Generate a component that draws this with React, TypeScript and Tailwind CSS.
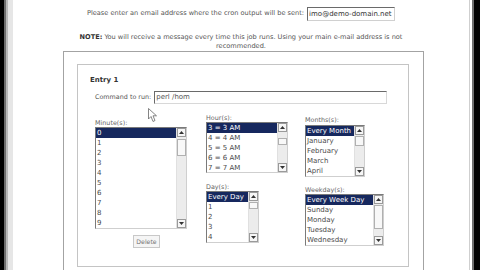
import React from "react";

function Tri({ up }: { up?: boolean }) {
  return (
    <svg width="5" height="3" viewBox="0 0 5 3">
      {up ? <path d="M0 3 L2.5 0 L5 3 Z" fill="#333" /> : <path d="M0 0 L2.5 3 L5 0 Z" fill="#333" />}
    </svg>
  );
}

function ListBox({
  box,
  items,
  thumb,
}: {
  box: string;
  items: string[];
  thumb: string;
}) {
  return (
    <div className={`flex border border-t-[#7a7a7a] border-l-[#7a7a7a] border-r-[#cfcfcf] border-b-[#cfcfcf] bg-white ${box}`}>
      <div className="flex-1 min-w-0 overflow-hidden">
        {items.map((it, i) => (
          <div
            key={i}
            className={
              i === 0
                ? "h-[10px] leading-[10px] pl-[1px] text-[7px] whitespace-nowrap bg-[#16285e] text-white"
                : "h-[10px] leading-[10px] pl-[1px] text-[7px] whitespace-nowrap text-[#4a4a4a]"
            }
          >
            {it}
          </div>
        ))}
      </div>
      <div className="w-[10px] flex flex-col bg-[#ececec] border-l border-[#e0e0e0]">
        <div className="h-[9px] flex items-center justify-center bg-[#f6f6f6] border border-[#9a9a9a]">
          <Tri up />
        </div>
        <div className={`bg-[#f8f8f8] border border-[#b0b0b0] ${thumb}`} />
        <div className="flex-1" />
        <div className="h-[9px] flex items-center justify-center bg-[#f6f6f6] border border-[#9a9a9a]">
          <Tri />
        </div>
      </div>
    </div>
  );
}

export default function App() {
  return (
    <div className="relative w-[480px] h-[270px] bg-black flex overflow-hidden font-['DejaVu_Sans',sans-serif]">
      <div className="w-[4px] h-full bg-black" />
      <div className="w-[2px] h-full bg-[#6e6e6e]" />
      <div className="w-[2px] h-full bg-[#b8b8b8]" />
      <div className="w-[5px] h-full bg-[#e6e6e6]" />
      <div className="flex-1 h-full bg-white flex flex-col">
        <div className="mt-[7px] h-[14px] flex justify-center items-center gap-[3px]">
          <span className="text-[6.6px] text-[#555]">
            Please enter an email address where the cron output will be sent:
          </span>
          <div className="w-[88px] h-[14px] border border-t-[#6a6a6a] border-l-[#6a6a6a] border-r-[#d0d0d0] border-b-[#d0d0d0] flex items-center pl-[1px] text-[7px] text-[#333] overflow-hidden whitespace-nowrap">
            imo@demo-domain.net
          </div>
        </div>
        <div className="mt-[12px] text-center text-[6.6px] leading-[9px] text-[#555]">
          <b className="text-[#333]">NOTE:</b> You will receive a message every time this job runs. Using your main e-mail address is not
          <br />
          recommended.
        </div>
        <div className="ml-[50px] w-[361px] h-[230px] border border-[#a3a3a3] border-b-0">
          <div className="ml-[13px] mt-[12px] w-[332px] h-[203px] border border-[#c4c4c4] flex flex-col">
            <div className="ml-[12px] mt-[10px] h-[10px] leading-[10px] text-[7px] font-bold text-[#333]">Entry 1</div>
            <div className="ml-[17px] mt-[6px] h-[13px] flex items-center gap-[3px]">
              <span className="text-[6.4px] text-[#555]">Command to run:</span>
              <div className="w-[233px] h-[13px] border border-t-[#6a6a6a] border-l-[#6a6a6a] border-r-[#d8d8d8] border-b-[#d8d8d8] flex items-center pl-[1px] text-[7px] text-[#555]">
                perl /hom
              </div>
            </div>
            <div className="ml-[17px] mt-[10px] flex items-start">
              <div className="w-[92px] mt-[5px] flex flex-col">
                <div className="h-[8px] leading-[8px] text-[6.4px] text-[#666]">Minute(s):</div>
                <ListBox
                  box="w-[92px] h-[102px]"
                  items={["0", "1", "2", "3", "4", "5", "6", "7", "8", "9"]}
                  thumb="h-[17px] mt-[2px]"
                />
                <div className="ml-[38px] mt-[6px] w-[27px] h-[13px] bg-[#f5f5f5] border border-[#c8c8c8] flex items-center justify-center text-[6.2px] text-[#777]">
                  Delete
                </div>
              </div>
              <div className="ml-[19px] w-[82px] flex flex-col">
                <div className="h-[8px] leading-[8px] text-[6.4px] text-[#666]">Hour(s):</div>
                <ListBox
                  box="w-[82px] h-[51px]"
                  items={["3 = 3 AM", "4 = 4 AM", "5 = 5 AM", "6 = 6 AM", "7 = 7 AM"]}
                  thumb="h-[7px] mt-[6px]"
                />
                <div className="mt-[10px] h-[8px] leading-[8px] text-[6.4px] text-[#666]">Day(s):</div>
                <ListBox
                  box="w-[53px] h-[52px]"
                  items={["Every Day", "1", "2", "3", "4"]}
                  thumb="h-[7px] mt-[1px]"
                />
              </div>
              <div className="ml-[17px] mt-[2px] w-[80px] flex flex-col">
                <div className="h-[8px] leading-[8px] text-[6.4px] text-[#666]">Months(s):</div>
                <ListBox
                  box="w-[60px] mt-[1px] h-[52px]"
                  items={["Every Month", "January", "February", "March", "April"]}
                  thumb="h-[10px] mt-[1px]"
                />
                <div className="mt-[9px] h-[8px] leading-[8px] text-[6.4px] text-[#666]">Weekday(s):</div>
                <ListBox
                  box="w-[79px] h-[52px]"
                  items={["Every Week Day", "Sunday", "Monday", "Tuesday", "Wednesday"]}
                  thumb="h-[24px] mt-[1px]"
                />
              </div>
            </div>
          </div>
        </div>
      </div>
      <div className="w-[1px] h-full bg-[#cfcfcf]" />
      <div className="w-[2px] h-full bg-white" />
      <div className="w-[2px] h-full bg-[#6e6e6e]" />
      <div className="w-[6px] h-full bg-black" />
      <svg className="absolute left-[148px] top-[108px]" width="10" height="15" viewBox="0 0 10 15">
        <path d="M0.5 0.5 L0.5 11 L3 8.5 L5 13.5 L7 12.5 L5 7.8 L8.5 7.8 Z" fill="#fff" stroke="#666" strokeWidth="0.8" />
      </svg>
    </div>
  );
}
